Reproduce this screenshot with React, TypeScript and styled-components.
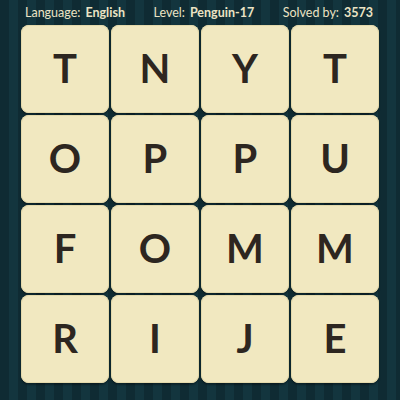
import React from "react";
import styled, { createGlobalStyle } from "styled-components";

const Global = createGlobalStyle`
  html, body { margin: 0; padding: 0; }
  body { background: #10303a; }
`;

const Page = styled.div`
  width: 400px;
  height: 400px;
  box-sizing: border-box;
  overflow: hidden;
  background-color: #11303a;
  background-image: repeating-linear-gradient(
    90deg,
    #0f2b33 0px,
    #0f2b33 9px,
    #13353e 9px,
    #13353e 18px
  );
  font-family: Lato, "Liberation Sans", sans-serif;
  display: flex;
  flex-direction: column;
`;

const Header = styled.div`
  height: 25px;
  display: flex;
  align-items: center;
  justify-content: space-between;
  padding: 0 27px 1px 25px;
  box-sizing: border-box;
  color: #ebe3c4;
  font-size: 12.5px;
  white-space: nowrap;
`;

const Info = styled.span`
  font-weight: 400;
`;

const Value = styled.b`
  font-weight: 700;
  margin-left: 5px;
`;

const Board = styled.div`
  display: grid;
  grid-template-columns: repeat(4, 88px);
  grid-auto-rows: 88px;
  gap: 2px;
  padding-left: 21px;
`;

const Tile = styled.div`
  background: #f1e8c0;
  border-radius: 8px;
  box-shadow: inset 0 0 0 1px #e4d9ab, 0 2px 2px rgba(0, 0, 0, 0.35);
  display: flex;
  align-items: center;
  justify-content: center;
  color: #2d2620;
  font-family: Lato, "Liberation Sans", sans-serif;
  font-weight: 700;
  font-size: 40px;
  padding-bottom: 3px;
  box-sizing: border-box;
`;

const letters = "TNYTOPPUFOMMRIJE".split("");

export default function App() {
  return (
    <Page>
      <Global />
      <Header>
        <Info>
          Language:<Value>English</Value>
        </Info>
        <Info>
          Level:<Value>Penguin-17</Value>
        </Info>
        <Info>
          Solved by:<Value>3573</Value>
        </Info>
      </Header>
      <Board>
        {letters.map((l, i) => (
          <Tile key={i}>{l}</Tile>
        ))}
      </Board>
    </Page>
  );
}
